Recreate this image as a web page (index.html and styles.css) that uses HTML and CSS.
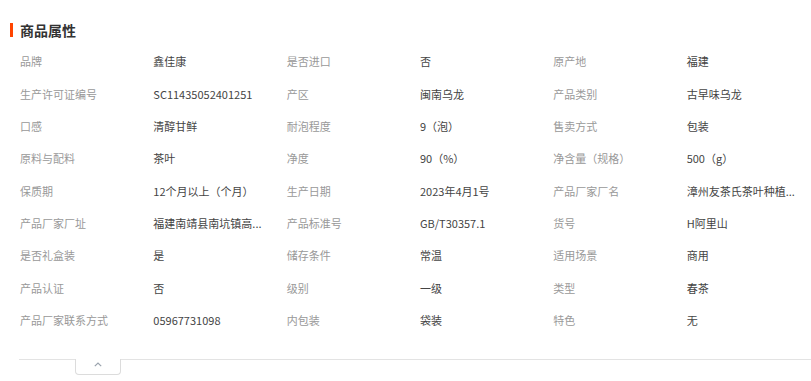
FILE: index.html
```html
<!DOCTYPE html>
<html lang="zh">
<head>
<meta charset="utf-8">
<link rel="stylesheet" href="styles.css">
</head>
<body>
<section class="attrs">
  <h2 class="title">商品属性</h2>
  <div class="grid">
    <div class="k">品牌</div><div class="v">鑫佳康</div>
    <div class="k">是否进口</div><div class="v">否</div>
    <div class="k">原产地</div><div class="v">福建</div>

    <div class="k">生产许可证编号</div><div class="v">SC11435052401251</div>
    <div class="k">产区</div><div class="v">闽南乌龙</div>
    <div class="k">产品类别</div><div class="v">古早味乌龙</div>

    <div class="k">口感</div><div class="v">清醇甘鲜</div>
    <div class="k">耐泡程度</div><div class="v">9（泡）</div>
    <div class="k">售卖方式</div><div class="v">包装</div>

    <div class="k">原料与配料</div><div class="v">茶叶</div>
    <div class="k">净度</div><div class="v">90（%）</div>
    <div class="k">净含量（规格）</div><div class="v">500（g）</div>

    <div class="k">保质期</div><div class="v">12个月以上（个月）</div>
    <div class="k">生产日期</div><div class="v">2023年4月1号</div>
    <div class="k">产品厂家厂名</div><div class="v">漳州友茶氏茶叶种植...</div>

    <div class="k">产品厂家厂址</div><div class="v">福建南靖县南坑镇高...</div>
    <div class="k">产品标准号</div><div class="v">GB/T30357.1</div>
    <div class="k">货号</div><div class="v">H阿里山</div>

    <div class="k">是否礼盒装</div><div class="v">是</div>
    <div class="k">储存条件</div><div class="v">常温</div>
    <div class="k">适用场景</div><div class="v">商用</div>

    <div class="k">产品认证</div><div class="v">否</div>
    <div class="k">级别</div><div class="v">一级</div>
    <div class="k">类型</div><div class="v">春茶</div>

    <div class="k">产品厂家联系方式</div><div class="v">05967731098</div>
    <div class="k">内包装</div><div class="v">袋装</div>
    <div class="k">特色</div><div class="v">无</div>
  </div>
  <div class="foot">
    <button class="toggle" type="button" aria-label="收起">
      <svg width="8" height="5" viewBox="0 0 8 5"><path d="M0.8 4.2 L4 1 L7.2 4.2" fill="none" stroke="#9aa3ad" stroke-width="1.2"/></svg>
    </button>
  </div>
</section>
</body>
</html>
```

FILE: styles.css
```css
html, body {
  margin: 0;
  padding: 0;
  background: #fff;
  overflow: hidden;
}
body {
  width: 811px;
  height: 381px;
  font-family: "Noto Sans CJK SC", "Noto Sans", sans-serif;
  font-size: 11px;
  color: #333;
}
.attrs {
  padding-top: 23px;
}
.title {
  margin: 0 0 0 10px;
  padding-left: 7px;
  border-left: 3px solid #ff4400;
  font-size: 14px;
  font-weight: 700;
  line-height: 14px;
  height: 14px;
  color: #333;
}
.grid {
  margin-top: 8px;
  margin-left: 20px;
  width: 800px;
  display: grid;
  grid-template-columns: repeat(6, 133.33px);
  grid-auto-rows: 32.375px;
  align-items: center;
}
.k {
  color: #999;
  line-height: 16px;
  white-space: nowrap;
}
.v {
  color: #444;
  line-height: 16px;
  white-space: nowrap;
}
.foot {
  margin-left: 19px;
  margin-top: 22.6px;
  border-top: 1px solid #e3e3e3;
  height: 22px;
}
.toggle {
  display: flex;
  align-items: flex-start;
  justify-content: center;
  margin: -1px 0 0 56px;
  width: 46px;
  height: 16px;
  padding: 3px 0 0;
  background: #fff;
  border: 1px solid #dcdcdc;
  border-top: none;
  border-radius: 0 0 4px 4px;
}
```
